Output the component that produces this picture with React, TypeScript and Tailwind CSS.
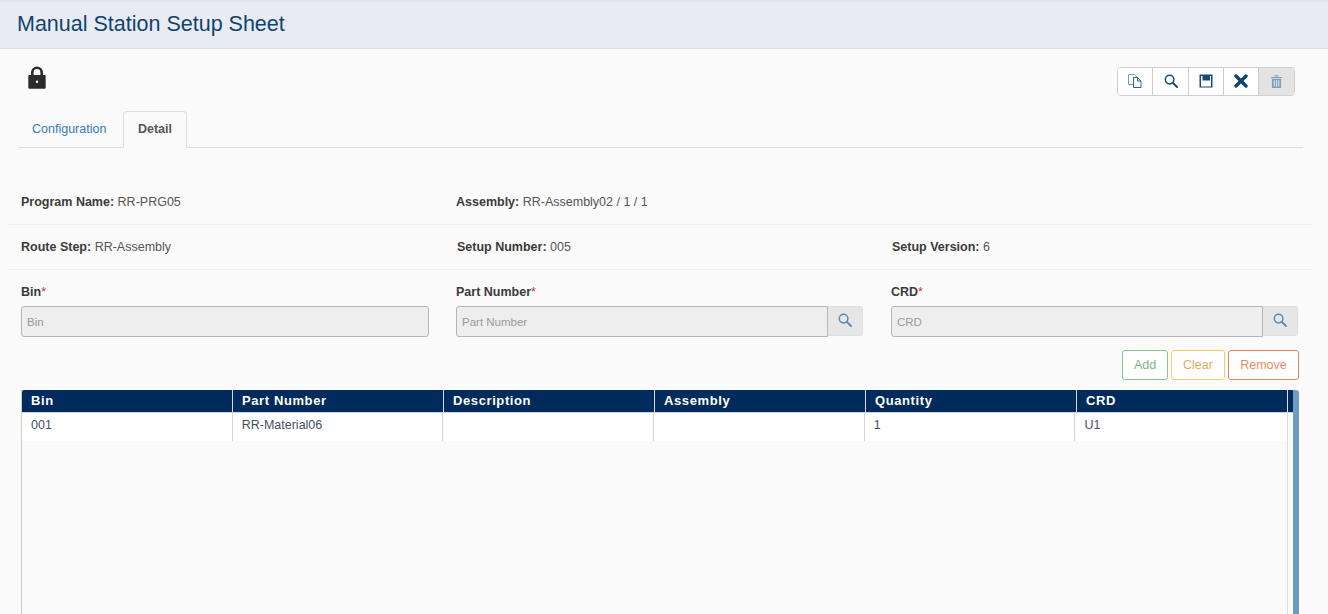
import React from "react";

const Search = ({ className = "" }: { className?: string }) => (
  <svg viewBox="0 0 14 14" className={className} fill="none" stroke="currentColor">
    <circle cx="5.6" cy="5.6" r="4.3" strokeWidth="1.5" />
    <path d="M8.8 8.8L13 13" strokeWidth="1.9" strokeLinecap="round" />
  </svg>
);

const ToolBtn = ({ children, w, disabled }: { children: React.ReactNode; w: string; disabled?: boolean }) => (
  <div className={`${w} h-full flex items-center justify-center ${disabled ? "bg-[#e3e3e3]" : "bg-white border-r border-[#cccccc]"}`}>{children}</div>
);

const Req = () => <span className="text-[#c0392b] font-normal">*</span>;

const Info = ({ label, value, className = "" }: { label: string; value: string; className?: string }) => (
  <div className={`text-[12.5px] text-[#555555] ${className}`}>
    <b className="font-bold text-[#3b3b3b]">{label}:</b> {value}
  </div>
);

const Field = ({ label, lookup, wide }: { label: string; lookup?: boolean; wide: string }) => (
  <div className="pl-[13px]">
    <div className="text-[12.5px] leading-[14px] font-bold text-[#3b3b3b] mb-[7px] h-[14px]">
      {label}
      <Req />
    </div>
    <div className="flex h-[31px]">
      <div className={`${wide} h-[31px] bg-[#eeeeee] border border-[#b5b5b5] ${lookup ? "rounded-l-[3px]" : "rounded-[3px]"} flex items-center pl-[5px] pt-[2px] text-[11.5px] text-[#9a9a9a]`}>{label}</div>
      {lookup && (
        <div className="w-[35px] h-[30px] bg-[#e6e6e6] border border-[#e0e0e0] border-l-0 rounded-r-[3px] flex items-center justify-center text-[#5b8ab3]">
          <Search className="w-[14px] h-[14px] -mt-[3px]" />
        </div>
      )}
    </div>
  </div>
);

const ActionBtn = ({ label, cls }: { label: string; cls: string }) => (
  <div className={`h-[30px] flex items-center justify-center bg-white border rounded-[3px] text-[12.5px] ${cls}`}>{label}</div>
);

const cols = ["Bin", "Part Number", "Description", "Assembly", "Quantity", "CRD"];
const row = ["001", "RR-Material06", "", "", "1", "U1"];

export default function App() {
  return (
    <div className="w-[1328px] h-[614px] overflow-hidden bg-[#fafafa] font-['Liberation_Sans',Arial,sans-serif]">
      <header className="h-[49px] bg-[#e8ebf1] border-t-2 border-t-[#dfe3ea] border-b border-b-[#dde1e8] flex items-center pl-[17px]">
        <h1 className="text-[21.5px] text-[#0f4470] font-normal leading-none">Manual Station Setup Sheet</h1>
      </header>

      <div className="flex justify-between items-start h-[62px] pt-[18px] pl-[28px] pr-[33px]">
        <svg viewBox="0 0 18 23" className="w-[18px] h-[23px] -mt-[1px]" fill="#2b2b2b">
          <path d="M3 9V6.5a6 6 0 0 1 12 0V9h-2.6V6.5a3.4 3.4 0 0 0-6.8 0V9z" />
          <path fillRule="evenodd" d="M1.5 9h15a1.2 1.2 0 0 1 1.2 1.2v11.4a1.2 1.2 0 0 1-1.2 1.2h-15A1.2 1.2 0 0 1 .3 21.6V10.2A1.2 1.2 0 0 1 1.5 9zM9 14.6a1.2 1.2 0 1 0 0 2.4A1.2 1.2 0 0 0 9 14.6z" />
        </svg>
        <div className="flex h-[29px] border border-[#cfcfcf] rounded-[4px] overflow-hidden">
          <ToolBtn w="w-[35px]">
            <svg viewBox="0 0 14 14" className="w-[14px] h-[14px] -mt-[1px]" fill="none" strokeWidth="1">
              <path d="M.5.5h6l2 2v8h-8z" stroke="#7d9dbd" />
              <path d="M5.5 3.5h4l3.5 3.5v6.5H5.5z" fill="#fff" stroke="#2f628f" />
              <path d="M9.5 3.5V7H13" stroke="#2f628f" />
            </svg>
          </ToolBtn>
          <ToolBtn w="w-[36px]">
            <Search className="w-[14px] h-[14px] -mt-[1px] text-[#164a78]" />
          </ToolBtn>
          <ToolBtn w="w-[35px]">
            <svg viewBox="0 0 14 14" className="w-[14px] h-[14px] -mt-[1px]">
              <path fillRule="evenodd" fill="#164a78" d="M.5.5h13v13H.5zM2 2v10.5h10V2h-1v4.5H3.5V2z" />
              <rect x="7.8" y="2.2" width="1.6" height="3" fill="#164a78" />
            </svg>
          </ToolBtn>
          <ToolBtn w="w-[35px]">
            <svg viewBox="0 0 14 14" className="w-[14px] h-[14px] -mt-[1px]" stroke="#0f4470" strokeWidth="3.4" strokeLinecap="round">
              <path d="M2 2l10 10M12 2L2 12" />
            </svg>
          </ToolBtn>
          <ToolBtn w="w-[35px]" disabled>
            <svg viewBox="0 0 12 14" className="w-[11px] h-[13px] -mt-[1px]" fill="#7f9fbd">
              <path d="M0 2h12v1.4H0zM4 .3h4v1.2H4z" />
              <path fillRule="evenodd" d="M1 4.2h10V14H1zM3 5.5v7h1.2v-7zM5.4 5.5v7h1.2v-7zM7.8 5.5v7H9v-7z" />
            </svg>
          </ToolBtn>
        </div>
      </div>

      <nav className="mx-[18px] mr-[25px] h-[37px] border-b border-[#dddddd] flex text-[12.5px]">
        <div className="w-[105px] pl-[14px] h-[36px] flex items-center text-[#337ab7]">Configuration</div>
        <div className="w-[64px] h-[37px] flex items-center justify-center bg-[#fafafa] border border-[#dddddd] border-b-[#fafafa] rounded-t-[4px] font-bold text-[#555555]">Detail</div>
      </nav>

      <section className="ml-[8px] w-[1305px] mt-[30px]">
        <div className="grid grid-cols-3 h-[47px] pt-[17px] border-b border-[#eeeeee] leading-[14px]">
          <Info className="pl-[13px]" label="Program Name" value="RR-PRG05" />
          <Info className="pl-[13px]" label="Assembly" value="RR-Assembly02 / 1 / 1" />
        </div>
        <div className="grid grid-cols-3 h-[45px] pt-[15px] border-b border-[#eeeeee] leading-[14px]">
          <Info className="pl-[13px]" label="Route Step" value="RR-Assembly" />
          <Info className="pl-[14px]" label="Setup Number" value="005" />
          <Info className="pl-[14px]" label="Setup Version" value="6" />
        </div>
        <div className="grid grid-cols-3 pt-[15px]">
          <Field label="Bin" wide="w-[408px]" />
          <Field label="Part Number" wide="w-[372px]" lookup />
          <Field label="CRD" wide="w-[372px]" lookup />
        </div>
      </section>

      <div className="flex justify-end gap-[3px] pr-[29px] mt-[13px] mb-[10px]">
        <ActionBtn label="Add" cls="w-[46px] border-[#86c98d] text-[#7fb383]" />
        <ActionBtn label="Clear" cls="w-[54px] border-[#f3cd6b] text-[#e2aa5f]" />
        <ActionBtn label="Remove" cls="w-[71px] border-[#e8835a] text-[#e58a66]" />
      </div>

      <div className="ml-[21px] w-[1278px] h-[224px] border-l border-[#cccccc] relative">
        <div className="flex h-[23px] bg-[#002b5c] rounded-t-[2px] border-b border-[#d5d5d5] text-white font-bold text-[13px] tracking-[0.6px] mr-[5px]">
          {cols.map((c) => (
            <div key={c} className="w-[211px] pl-[9px] border-r border-[#d9d9d9] leading-[21px]">{c}</div>
          ))}
        </div>
        <div className="flex h-[28px] bg-white text-[12.5px] text-[#43505e] mr-[11px]">
          {row.map((c, i) => (
            <div key={i} className={`w-[210.7px] pl-[9px] pt-[5px] leading-[14px] ${i < 5 ? "border-r border-[#d5d5d5]" : ""}`}>{c}</div>
          ))}
        </div>
        <div className="absolute top-0 right-[11px] bottom-0 w-px bg-[#dddddd]" />
        <div className="absolute top-0 right-0 bottom-0 w-[6px] bg-[#6f9cc3] rounded-tr-[3px]" />
      </div>
    </div>
  );
}
